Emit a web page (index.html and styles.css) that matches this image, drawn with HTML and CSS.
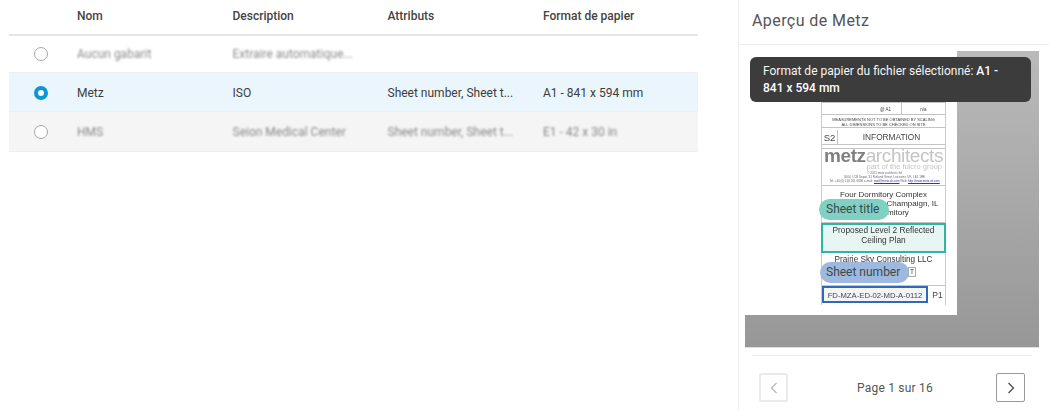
FILE: index.html
```html
<!DOCTYPE html>
<html lang="fr">
<head>
<meta charset="utf-8">
<title>Aperçu de Metz</title>
<link rel="stylesheet" href="styles.css">
</head>
<body>
<div class="app">
  <main class="list">
    <div class="row head">
      <div class="c-radio"></div><div class="c-name">Nom</div><div class="c-desc">Description</div><div class="c-attr">Attributs</div><div class="c-size">Format de papier</div>
    </div>
    <div class="row r1 dim">
      <div class="c-radio"><span class="radio"></span></div><div class="c-name"><span class="blur">Aucun gabarit</span></div><div class="c-desc"><span class="blur">Extraire automatique...</span></div><div class="c-attr"></div><div class="c-size"></div>
    </div>
    <div class="row r2 selected">
      <div class="c-radio"><span class="radio on"></span></div><div class="c-name">Metz</div><div class="c-desc">ISO</div><div class="c-attr">Sheet number, Sheet t...</div><div class="c-size">A1 - 841 x 594 mm</div>
    </div>
    <div class="row r3 dim">
      <div class="c-radio"><span class="radio"></span></div><div class="c-name"><span class="blur">HMS</span></div><div class="c-desc"><span class="blur">Seion Medical Center</span></div><div class="c-attr"><span class="blur">Sheet number, Sheet t...</span></div><div class="c-size"><span class="blur">E1 - 42 x 30 in</span></div>
    </div>
  </main>
  <aside class="panel">
    <h2 class="panel-title">Aperçu de Metz</h2>
    <div class="stage">
      <div class="sheet">
        <div class="block">
          <div class="b-row b-top"><span>REV.</span><span>DATE</span><span>CHECKED</span></div>
          <div class="b-row b-scale"><span class="grow">@ A1</span><span class="b-na">n/a</span></div>
          <div class="b-row b-note">MEASUREMENTS NOT TO BE OBTAINED BY SCALING<br>ALL DIMENSIONS TO BE CHECKED ON SITE</div>
          <div class="b-row b-info"><span class="b-s2">S2</span><span class="grow">INFORMATION</span></div>
          <div class="b-row b-logo">
            <div class="logo"><b>metz</b>architects</div>
            <div class="logo-sub">part of the fulcro group</div>
            <div class="logo-fine">© 2021 metz architects ltd<br>5000, LCB Depot, 31 Rutland Street, Leicester, UK, LE1 1RE<br>Tel: +44 (0) 116 261 6880 e-mail: <u>mail@metz.uk.com</u> Web: <u>http://www.metz.uk.com</u></div>
          </div>
          <div class="b-row b-project">Four Dormitory Complex<br><span class="b-city">Champaign, IL</span><br><span class="b-dorm">Dormitory</span></div>
          <div class="b-title">Proposed Level 2 Reflected<br>Ceiling Plan</div>
          <div class="b-row b-client">Prairie Sky Consulting LLC<br><span class="b-t">T</span></div>
          <div class="b-num"><span class="b-numbox">FD-MZA-ED-02-MD-A-0112</span><span class="b-rev">P1</span></div>
        </div>
      </div>
      <span class="pill pill-title">Sheet title</span>
      <span class="pill pill-number">Sheet number</span>
    </div>
    <div class="tip">Format de papier du fichier sélectionné: <b>A1 - 841 x 594 mm</b></div>
    <div class="pager">
      <button class="btn off" aria-label="Précédent"><svg width="12" height="12" viewBox="0 0 12 12"><path d="M8.5 1 L3.5 6 L8.5 11" fill="none" stroke="#b5b5b5" stroke-width="1.2"/></svg></button>
      <span class="page">Page 1 sur 16</span>
      <button class="btn" aria-label="Suivant"><svg width="12" height="12" viewBox="0 0 12 12"><path d="M3.5 1 L8.5 6 L3.5 11" fill="none" stroke="#444" stroke-width="1.2"/></svg></button>
    </div>
  </aside>
</div>
</body>
</html>
```
FILE: styles.css
```css
* { box-sizing: border-box; }
html, body { margin: 0; height: 100%; background: #fff; }
body { font-family: Roboto, "Noto Sans", sans-serif; color: #3c3c3c; font-size: 12px; overflow: hidden; }
.app { display: flex; width: 1049px; height: 410px; }

.list { width: 739px; padding: 0 40px 0 9px; flex: none; border-right: 1px solid #eee; }
.row { display: flex; align-items: center; height: 38px; border-bottom: 1px solid #eee; }
.head { height: 36px; border-bottom: 2px solid #e6e6e6; font-weight: 500; color: #444; padding-bottom: 3px; }
.r1 { height: 37px; }
.r2 { height: 39px; background: #ebf6fc; padding-top: 1px; }
.r3 { height: 40px; background: #f5f5f5; }
.c-radio { width: 68px; display: flex; justify-content: center; padding-right: 5px; }
.c-name { width: 155.5px; }
.c-desc { width: 155px; }
.c-attr { width: 155.5px; }
.c-size { flex: 1; }
.blur { filter: blur(1.1px); opacity: .6; display: inline-block; }
.radio { width: 14px; height: 14px; border-radius: 50%; border: 1px solid #a8a8a8; background: #fff; display: block; }
.radio.on { border: 4px solid #0b96d6; }

.panel { flex: 1; display: flex; flex-direction: column; position: relative; min-width: 0; }
.panel-title { margin: 0; height: 45px; padding: 9px 0 0 13px; font-size: 16px; line-height: 24px; font-weight: 400; color: #555; border-bottom: 1px solid #eee; letter-spacing: .42px; }
.stage { position: relative; margin: 6px 10px 0 6px; width: 294px; height: 297px; background: linear-gradient(#bababa, #979797); border-bottom: 1px solid #ddd; }
.sheet { width: 212px; height: 264px; background: #fff; padding: 47px 0 0 76px; font-family: "Liberation Sans", sans-serif; color: #444; overflow: hidden; }
.block { width: 125px; height: 207px; display: flex; flex-direction: column; border-left: 1px solid #ccc; border-right: 1px solid #ccc; filter: blur(.5px); }
.b-row { border-bottom: 1px solid #c4c4c4; text-align: center; }
.b-top { height: 5px; font-size: 3px; line-height: 4px; display: flex; justify-content: space-between; color: #888; padding: 0 10px 0 2px; overflow: hidden; }
.b-scale { height: 12px; display: flex; font-size: 4.5px; line-height: 13px; }
.grow { flex: 1; }
.b-scale .grow { padding-left: 48px; }
.b-na { width: 44px; border-left: 1px solid #c4c4c4; }
.b-note { height: 13px; font-size: 4px; line-height: 5px; padding-top: 1.5px; margin-bottom: 2px; }
.b-info { height: 15px; display: flex; align-items: center; font-size: 8.3px; margin-bottom: 3px; }
.b-s2 { width: 16px; height: 15px; line-height: 15px; border-right: 1px solid #c4c4c4; font-size: 9.5px; }
.b-logo { height: 38px; padding-left: 2px; text-align: left; border-top: 1px solid #c4c4c4; }
.logo { font-size: 19px; line-height: 14px; color: #c4c4c4; letter-spacing: -.4px; white-space: nowrap; }
.logo b { color: #808080; }
.logo-sub { font-size: 7.5px; line-height: 7px; color: #c4c4c4; text-align: right; padding-right: 3px; }
.logo-fine { font-size: 3px; line-height: 4px; color: #667; text-align: center; white-space: nowrap; padding-top: 1px; }
.logo-fine u { color: #33a; }
.b-project { height: 37px; font-size: 8px; line-height: 9px; padding-top: 4px; color: #333; }
.b-city { padding-left: 58px; }
.b-dorm { padding-left: 16px; }
.b-title { height: 30px; margin: 0 -1px; border: 2px solid #2fb5a5; background: #e8f6f3; font-size: 8.3px; line-height: 9.5px; text-align: center; padding-top: 1px; color: #333; white-space: nowrap; }
.b-client { height: 33px; font-size: 8.2px; line-height: 10px; padding-top: 2px; color: #333; }
.b-t { display: inline-block; border: 1px solid #aaa; padding: 0 1px; font-size: 6.5px; line-height: 8px; margin: 2px 0 0 57px; }
.b-num { display: flex; flex: 1; align-items: flex-end; padding: 0 0 2px 0; gap: 2px; }
.b-numbox { width: 106px; height: 17px; border: 2px solid #2f69b8; background: #f3f5f8; font-size: 7.7px; line-height: 15px; text-align: center; white-space: nowrap; }
.b-rev { flex: 1; text-align: center; font-size: 8.5px; line-height: 15px; }
.pill { position: absolute; height: 21px; border-radius: 11px; font-size: 12px; line-height: 20px; padding: 0 7px; color: #3a4a4a; white-space: nowrap; }
.pill-title { left: 74px; top: 148px; width: 70px; background: #7fd1c3; }
.pill-number { left: 75px; top: 211px; width: 89px; padding: 0 6px; background: #9fb9de; }

.tip { position: absolute; left: 11px; top: 57px; width: 281px; height: 45px; background: #3c3c3c; border-radius: 6px; color: #f5f5f5; padding: 6px 13px; font-size: 12px; line-height: 17px; }
.tip b { font-weight: 500; color: #fff; }

.pager { margin: 7px 17px 0 13px; border-top: 1px solid #eee; flex: 1; display: flex; align-items: center; justify-content: space-between; padding: 9px 7px 0; }
.btn { width: 29px; height: 29px; background: #fff; border: 1px solid #999; border-radius: 2px; padding: 0; display: flex; align-items: center; justify-content: center; }
.btn.off { border: 2px solid #eaeaea; }
.page { color: #555; font-size: 12px; letter-spacing: .2px; padding-left: 6px; }
```
